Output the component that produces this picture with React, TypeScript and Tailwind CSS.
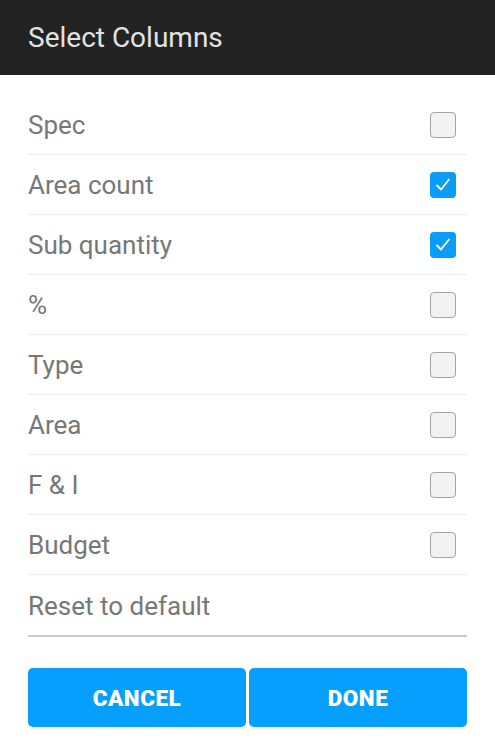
import { useState } from "react";

const COLUMNS = ["Spec", "Area count", "Sub quantity", "%", "Type", "Area", "F & I", "Budget"];

function CheckBox({ checked, onClick }: { checked: boolean; onClick: () => void }) {
  return (
    <button
      onClick={onClick}
      className={`w-[26px] h-[26px] rounded-[4px] flex items-center justify-center ${
        checked ? "bg-[#0b9df5]" : "bg-[#f2f2f2] border-[1.5px] border-[#a3a3a3]"
      }`}
    >
      {checked && (
        <svg width="18" height="16" viewBox="0 0 18 16" fill="none">
          <path d="M3 8.5 L7 12.5 L15 2.5" stroke="white" strokeWidth="1.8" strokeLinecap="round" strokeLinejoin="round" />
        </svg>
      )}
    </button>
  );
}

export default function App() {
  const [selected, setSelected] = useState<Record<string, boolean>>({ "Area count": true, "Sub quantity": true });

  return (
    <div className="w-[495px] h-[750px] bg-white font-['Roboto',sans-serif]">
      <div className="h-[75px] bg-[#232323] flex items-center px-[28px]">
        <h1 className="text-[28px] text-[#e2e2e2] leading-none">Select Columns</h1>
      </div>

      <div className="px-[28px] pt-[20px]">
        {COLUMNS.map(c => (
          <div key={c} className="h-[60px] flex items-center justify-between border-b border-[#ececec] pr-[11px]">
            <span className="text-[26px] text-[#777777] pt-[2px]">{c}</span>
            <CheckBox checked={!!selected[c]} onClick={() => setSelected(s => ({ ...s, [c]: !s[c] }))} />
          </div>
        ))}
        <div className="h-[62px] flex items-center border-b-2 border-[#cdcac6]">
          <span className="text-[26px] text-[#777777] pt-[2px]">Reset to default</span>
        </div>

        <div className="flex gap-[3px] mt-[31px]">
          <button className="flex-1 h-[59px] pt-[3px] rounded-[5px] bg-[#069ffd] text-white text-[22.5px] font-black tracking-[0.5px]">
            CANCEL
          </button>
          <button className="flex-1 h-[59px] pt-[3px] rounded-[5px] bg-[#069ffd] text-white text-[22.5px] font-black tracking-[0.5px]">
            DONE
          </button>
        </div>
      </div>
    </div>
  );
}
